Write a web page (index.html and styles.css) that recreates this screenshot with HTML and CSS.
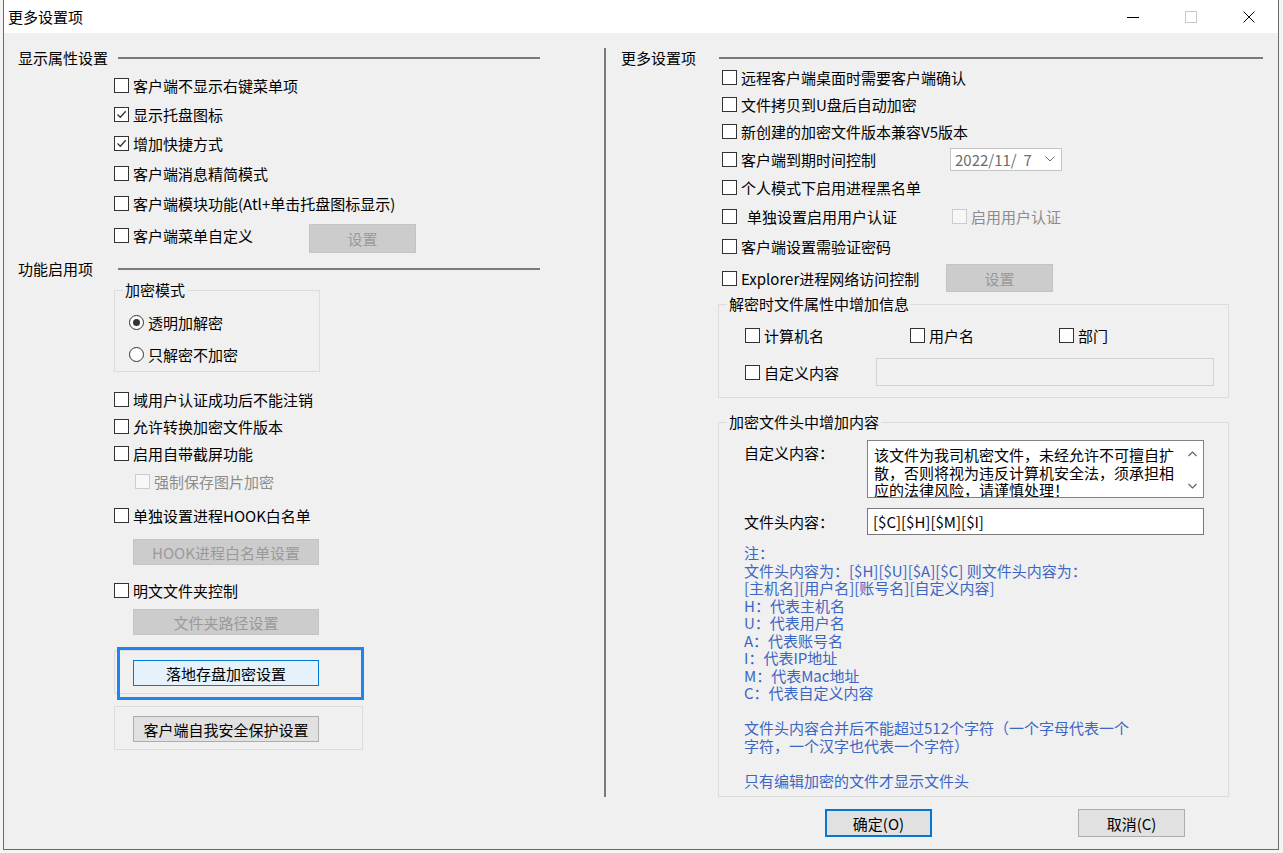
FILE: index.html
```html
<!DOCTYPE html>
<html lang="zh-CN">
<head>
  <meta charset="UTF-8" />
  <title>更多设置项</title>
  <link rel="stylesheet" href="styles.css">
</head>
<body>
<div class="window">
  <div class="titlebar">
    <span class="title">更多设置项</span>
    <div class="caption">
      <span class="cap-btn"><svg width="12" height="12" viewBox="0 0 12 12"><path d="M0 6.5H12" stroke="#000"/></svg></span>
      <span class="cap-btn"><svg width="12" height="12" viewBox="0 0 12 12"><rect x="0.5" y="0.5" width="11" height="11" fill="none" stroke="#c8c8c8"/></svg></span>
      <span class="cap-btn"><svg width="12" height="12" viewBox="0 0 12 12"><path d="M0.5 0.5L11.5 11.5M11.5 0.5L0.5 11.5" stroke="#000"/></svg></span>
    </div>
  </div>

  <div class="client">
    <div class="main">
      <!-- left: display / feature options -->
      <div class="col-left">
        <div class="sec-head"><span class="sec-label">显示属性设置</span><span class="rule"></span></div>
        <div class="opts opts-top">
          <div class="row h29"><span class="box"></span>客户端不显示右键菜单项</div>
          <div class="row h29"><span class="box"><svg viewBox="0 0 13 13"><path d="M2.5 6.5l2.8 2.8 5.4-6"/></svg></span>显示托盘图标</div>
          <div class="row h29"><span class="box"><svg viewBox="0 0 13 13"><path d="M2.5 6.5l2.8 2.8 5.4-6"/></svg></span>增加快捷方式</div>
          <div class="row h30"><span class="box"></span>客户端消息精简模式</div>
          <div class="row h30"><span class="box"></span>客户端模块功能(Atl+单击托盘图标显示)</div>
          <div class="row h35"><span class="box"></span>客户端菜单自定义<button class="btn off btn-set">设置</button></div>
        </div>

        <div class="sec-head mt6"><span class="sec-label">功能启用项</span><span class="rule"></span></div>
        <fieldset class="group mode">
          <legend>加密模式</legend>
          <div class="row h32 first"><span class="radio on"></span>透明加解密</div>
          <div class="row h33"><span class="radio"></span>只解密不加密</div>
        </fieldset>

        <div class="opts opts-mid">
          <div class="row h27"><span class="box"></span>域用户认证成功后不能注销</div>
          <div class="row h27"><span class="box"></span>允许转换加密文件版本</div>
          <div class="row h27"><span class="box"></span>启用自带截屏功能</div>
          <div class="row h28 ind dis"><span class="box"></span>强制保存图片加密</div>
          <div class="row h27 mt7"><span class="box"></span>单独设置进程HOOK白名单</div>
          <button class="btn off btn-wide mt10">HOOK进程白名单设置</button>
          <div class="row h27 mt12"><span class="box"></span>明文文件夹控制</div>
          <button class="btn off btn-wide mt5">文件夹路径设置</button>
        </div>

        <div class="btn-group mt15">
          <button class="btn hot btn-inner">落地存盘加密设置</button>
          <span class="focus-ring"></span>
        </div>
        <div class="btn-group mt12">
          <button class="btn btn-inner">客户端自我安全保护设置</button>
        </div>
      </div>

      <div class="divider"></div>

      <!-- right: more options -->
      <div class="col-right">
        <div class="sec-head tight"><span class="sec-label narrow">更多设置项</span><span class="rule"></span></div>
        <div class="opts-r">
          <div class="row h27"><span class="box"></span>远程客户端桌面时需要客户端确认</div>
          <div class="row h27"><span class="box"></span>文件拷贝到U盘后自动加密</div>
          <div class="row h27"><span class="box"></span>新创建的加密文件版本兼容V5版本</div>
          <div class="row h28"><span class="box"></span><span class="txt w209">客户端到期时间控制</span>
            <span class="date"><span>2022/11/&nbsp;&nbsp;7</span><svg width="10" height="6" viewBox="0 0 10 6"><path d="M0.5 0.5l4.5 4.5 4.5-4.5" fill="none" stroke="#707070"/></svg></span>
          </div>
          <div class="row h29"><span class="box"></span>个人模式下启用进程黑名单</div>
          <div class="row h29"><span class="box"></span><span class="txt w211 lead">单独设置启用用户认证</span>
            <span class="dis sub"><span class="box"></span>启用用户认证</span>
          </div>
          <div class="row h31"><span class="box"></span>客户端设置需验证密码</div>
          <div class="row h32"><span class="box"></span><span class="txt w205">Explorer进程网络访问控制</span><button class="btn off btn-set">设置</button></div>
        </div>

        <fieldset class="group wide">
          <legend>解密时文件属性中增加信息</legend>
          <div class="row h28 attr first2">
            <span class="item w165"><span class="box"></span>计算机名</span>
            <span class="item w149"><span class="box"></span>用户名</span>
            <span class="item"><span class="box"></span>部门</span>
          </div>
          <div class="row h30 attr mt8">
            <span class="item w131"><span class="box"></span>自定义内容</span>
            <span class="field off"></span>
          </div>
        </fieldset>

        <fieldset class="group wide head">
          <legend>加密文件头中增加内容</legend>
          <div class="form-row top first3">
            <span class="form-label pushed">自定义内容：</span>
            <div class="memo">
              <div class="memo-text">该文件为我司机密文件，未经允许不可擅自扩<br>散，否则将视为违反计算机安全法，须承担相<br>应的法律风险，请谨慎处理！</div>
              <div class="vscroll">
                <svg width="9" height="6" viewBox="0 0 9 6"><path d="M0.5 5L4.5 1l4 4" fill="none" stroke="#606060" stroke-width="1.2"/></svg>
                <svg width="9" height="6" viewBox="0 0 9 6"><path d="M0.5 1L4.5 5l4-4" fill="none" stroke="#606060" stroke-width="1.2"/></svg>
              </div>
            </div>
          </div>
          <div class="form-row mt10">
            <span class="form-label">文件头内容：</span>
            <span class="field">[$C][$H][$M][$I]</span>
          </div>
          <div class="notes">
            注：<br>
            文件头内容为：[$H][$U][$A][$C] 则文件头内容为：<br>
            [主机名][用户名][账号名][自定义内容]<br>
            H：代表主机名<br>
            U：代表用户名<br>
            A：代表账号名<br>
            I：代表IP地址<br>
            M：代表Mac地址<br>
            C：代表自定义内容<br>
            <br>
            文件头内容合并后不能超过512个字符（一个字母代表一个<br>
            字符，一个汉字也代表一个字符）<br>
            <br>
            只有编辑加密的文件才显示文件头
          </div>
        </fieldset>
      </div>
    </div>

    <div class="footer">
      <button class="btn default">确定(O)</button>
      <button class="btn">取消(C)</button>
    </div>
  </div>
</div>
</body>
</html>
```

FILE: styles.css
```css
body {
  margin: 0;
  background: #f4f4f4;
  font-family: "Noto Sans CJK SC", "Microsoft YaHei", sans-serif;
  font-size: 15px;
  color: #000;
}

.window {
  width: 1276px;
  margin-left: 3px;
  border: 1px solid #6a6a6a;
  border-top: none;
  box-sizing: border-box;
}

.titlebar {
  height: 33px;
  background: #fff;
  display: flex;
  align-items: center;
  justify-content: space-between;
  padding-left: 4px;
}
.title {
  line-height: 33px;
}
.caption {
  display: flex;
  height: 33px;
}
.cap-btn {
  width: 58px;
  display: flex;
  align-items: center;
  justify-content: center;
}

.client {
  height: 816px;
  background: #f0f0f0;
}
.main {
  display: flex;
  height: 767px;
}

/* columns */
.col-left {
  width: 600px;
  padding: 15px 0 0 14px;
  box-sizing: border-box;
}
.col-right {
  width: 672px;
  padding: 19px 15px 0 15px;
  box-sizing: border-box;
}
.divider {
  width: 2px;
  height: 749px;
  margin-top: 15px;
  background: #7a7a7a;
}

/* section headers with rule */
.sec-head {
  display: flex;
  align-items: center;
  height: 20px;
  width: 522px;
}
.sec-head.tight {
  height: 12px;
  width: 642px;
}
.sec-label {
  width: 100px;
  line-height: 20px;
  white-space: nowrap;
}
.sec-label.narrow {
  width: 98px;
  line-height: 12px;
}
.rule {
  flex: 1;
  height: 2px;
  background: #7a7a7a;
}

/* option rows */
.opts {
  padding-left: 96px;
}
.opts-top { margin-top: 3px; }
.opts-mid { margin-top: 14px; }
.opts-r { padding-left: 101px; }

.row {
  display: flex;
  align-items: center;
  white-space: nowrap;
}
.h27 { height: 27px; }
.h28 { height: 28px; }
.h29 { height: 29px; }
.h30 { height: 30px; }
.h31 { height: 31px; }
.h32 { height: 32px; }
.h33 { height: 33px; }
.h35 { height: 35px; }

.mt5 { margin-top: 5px; }
.mt6 { margin-top: 6px; }
.mt7 { margin-top: 7px; }
.mt8 { margin-top: 8px; }
.mt10 { margin-top: 10px; }
.mt12 { margin-top: 12px; }
.mt15 { margin-top: 15px; }

.ind { padding-left: 21px; }
.dis { color: #8c8c8c; }

.box {
  width: 15px;
  height: 15px;
  border: 1px solid #333;
  background: #fff;
  box-sizing: border-box;
  margin-right: 4px;
  flex-shrink: 0;
  display: inline-flex;
}
.box svg {
  width: 13px;
  height: 13px;
  fill: none;
  stroke: #333;
  stroke-width: 1.3;
}
.dis .box {
  border-color: #cccccc;
  background: #f7f7f7;
}

.radio {
  width: 15px;
  height: 15px;
  border: 1px solid #333;
  border-radius: 50%;
  background: #fff;
  box-sizing: border-box;
  margin-right: 4px;
  display: inline-flex;
  align-items: center;
  justify-content: center;
}
.radio.on::after {
  content: "";
  width: 7px;
  height: 7px;
  border-radius: 50%;
  background: #333;
}

.txt { display: inline-block; }
.w205 { width: 205px; }
.w209 { width: 209px; }
.w211 { width: 211px; box-sizing: border-box; }
.lead { padding-left: 6px; }
.sub { display: inline-flex; align-items: center; }

.date {
  width: 112px;
  height: 23px;
  border: 1px solid #c4c4c4;
  background: #fff;
  box-sizing: border-box;
  color: #6d6d6d;
  padding: 0 6px 0 4px;
  display: flex;
  align-items: center;
  justify-content: space-between;
  line-height: 21px;
}

/* buttons */
.btn {
  font-family: inherit;
  font-size: 15px;
  color: #000;
  background: #e1e1e1;
  border: 1px solid #adadad;
  padding: 0;
  width: 107px;
  height: 28px;
  box-sizing: border-box;
}
.btn.off {
  background: #cccccc;
  border-color: #c4c4c4;
  color: #9a9a9a;
}
.btn.hot {
  background: #e5f1fb;
  border-color: #0078d7;
}
.btn.default {
  border-color: #0078d7;
  box-shadow: inset 0 0 0 1px #0078d7;
}
.btn-set {
  height: 29px;
  margin-left: 56px;
  margin-top: 5px;
}
.opts-r .btn-set {
  height: 28px;
  margin: 0;
}
.btn-wide {
  display: block;
  width: 186px;
  height: 26px;
  margin-left: 19px;
}
.btn-group {
  position: relative;
  width: 249px;
  margin-left: 96px;
  border: 1px solid #dcdcdc;
  box-sizing: border-box;
  padding: 9px 0 7px 18px;
}
.btn-inner {
  display: block;
  width: 186px;
  height: 26px;
}
.focus-ring {
  position: absolute;
  left: 2px;
  top: -4px;
  width: 247px;
  height: 53px;
  border: 3px solid #1e84f0;
  box-sizing: border-box;
}

/* group boxes */
.group {
  margin: 1px 0 0 96px;
  padding: 0;
  border: 1px solid #dcdcdc;
  min-inline-size: 0;
}
.group legend {
  margin-left: 8px;
  padding: 0 2px;
  line-height: 20px;
}
.group.mode {
  width: 206px;
  box-sizing: border-box;
}
.group.mode .row { padding-left: 14px; }
.group.mode .first { margin-top: 6px; }

.group.wide {
  width: 511px;
  box-sizing: border-box;
  margin: 0 0 0 97px;
  padding: 0 0 10px 0;
}
.group.head {
  margin-top: 14px;
  padding-bottom: 7px;
}
.attr { padding-left: 26px; }
.first2 { margin-top: 7px; }
.item {
  display: inline-flex;
  align-items: center;
}
.w131 { width: 131px; }
.w149 { width: 149px; }
.w165 { width: 165px; }

.field {
  width: 338px;
  height: 28px;
  box-sizing: border-box;
  border: 1px solid #7a7a7a;
  background: #fff;
  padding-left: 5px;
  line-height: 25px;
}
.field.off {
  background: #f0f0f0;
  border-color: #d2d2d2;
}

.form-row {
  display: flex;
  align-items: center;
  padding-left: 25px;
}
.form-row.top { align-items: flex-start; }
.first3 { margin-top: 8px; }
.form-row .field {
  width: 337px;
  height: 27px;
}
.form-label {
  width: 123px;
  line-height: 17.5px;
}
.form-label.pushed { margin-top: 4px; }

.memo {
  width: 337px;
  height: 58px;
  border: 1px solid #828282;
  background: #fff;
  box-sizing: border-box;
  display: flex;
}
.memo-text {
  flex: 1;
  padding: 5px 0 0 6px;
  line-height: 17.5px;
  overflow: hidden;
  white-space: nowrap;
}
.vscroll {
  width: 21px;
  display: flex;
  flex-direction: column;
  justify-content: space-between;
  align-items: center;
  padding: 10px 0 8px;
  box-sizing: border-box;
}

.notes {
  margin-top: 9px;
  padding-left: 25px;
  line-height: 17.5px;
  color: #3b66c4;
  white-space: nowrap;
}

/* dialog buttons */
.footer {
  display: flex;
  gap: 146px;
  padding: 9px 0 0 821px;
}
```
